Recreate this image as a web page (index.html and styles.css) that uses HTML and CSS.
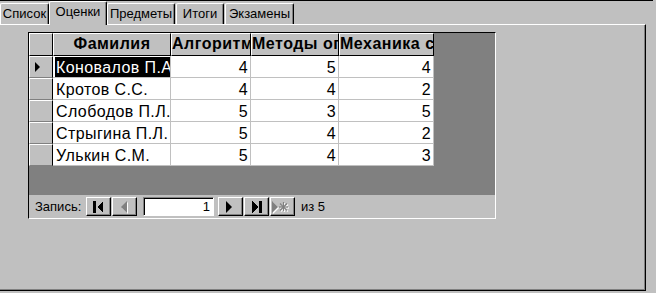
FILE: index.html
```html
<!DOCTYPE html>
<html lang="ru">
<head>
<meta charset="utf-8">
<title>Оценки</title>
<link rel="stylesheet" href="styles.css">
</head>
<body>
<div class="topline"></div>
<div class="tabs">
  <div class="tab t-list">Список</div>
  <div class="tab sel t-marks">Оценки</div>
  <div class="tab t-subj">Предметы</div>
  <div class="tab t-sum">Итоги</div>
  <div class="tab t-exam">Экзамены</div>
</div>
<div class="panel">
  <div class="sub">
    <div class="row hd">
      <div class="cell c0"></div>
      <div class="cell c1 center">Фамилия</div>
      <div class="cell c2">Алгоритмы</div>
      <div class="cell c3">Методы оптимизации</div>
      <div class="cell c4">Механика сплошных сред</div>
    </div>
    <div class="row">
      <div class="cell c0 sel-row"><svg class="rec-arrow" width="6" height="10" viewBox="0 0 6 10"><polygon points="0,0 5,5 0,10" fill="#000"/></svg></div>
      <div class="cell c1 active"><span class="hl">Коновалов П.А.</span></div>
      <div class="cell c2 num">4</div>
      <div class="cell c3 num">5</div>
      <div class="cell c4 num">4</div>
    </div>
    <div class="row">
      <div class="cell c0"></div>
      <div class="cell c1 name">Кротов С.С.</div>
      <div class="cell c2 num">4</div>
      <div class="cell c3 num">4</div>
      <div class="cell c4 num">2</div>
    </div>
    <div class="row">
      <div class="cell c0"></div>
      <div class="cell c1 name">Слободов П.Л.</div>
      <div class="cell c2 num">5</div>
      <div class="cell c3 num">3</div>
      <div class="cell c4 num">5</div>
    </div>
    <div class="row">
      <div class="cell c0"></div>
      <div class="cell c1 name">Стрыгина П.Л.</div>
      <div class="cell c2 num">5</div>
      <div class="cell c3 num">4</div>
      <div class="cell c4 num">2</div>
    </div>
    <div class="row">
      <div class="cell c0"></div>
      <div class="cell c1 name">Улькин С.М.</div>
      <div class="cell c2 num">5</div>
      <div class="cell c3 num">4</div>
      <div class="cell c4 num">3</div>
    </div>
    <div class="empty"></div>
    <div class="nav">
      <span class="nav-label">Запись:</span>
      <div class="btn b-first"><svg width="23" height="17" viewBox="0 0 23 17" shape-rendering="crispEdges"><rect x="6" y="3" width="3" height="12" fill="#000"/><polygon points="10,9 16,3 16,15" fill="#000"/></svg></div>
      <div class="btn b-gap"><svg width="23" height="17" viewBox="0 0 23 17"><polygon points="9,10 15,4 15,16" fill="#fff"/><polygon points="8,9 14,3 14,15" fill="#808080"/></svg></div>
      <div class="rec-input">1</div>
      <div class="btn b-next"><svg width="23" height="17" viewBox="0 0 23 17"><polygon points="7,3 13,9 7,15" fill="#000"/></svg></div>
      <div class="btn b-gap"><svg width="23" height="17" viewBox="0 0 23 17" shape-rendering="crispEdges"><polygon points="7,3 13,9 7,15" fill="#000"/><rect x="14" y="3" width="3" height="12" fill="#000"/></svg></div>
      <div class="btn b-gap"><svg width="23" height="17" viewBox="0 0 23 17"><polygon points="2,4 8,10 2,16" fill="#fff"/><polygon points="1,3 7,9 1,15" fill="#808080"/><g stroke="#fff" stroke-width="1.2"><line x1="13.5" y1="5" x2="13.5" y2="14"/><line x1="9" y1="10" x2="18" y2="10"/><line x1="10" y1="6.5" x2="17" y2="13.5"/><line x1="17" y1="6.5" x2="10" y2="13.5"/></g><g stroke="#808080" stroke-width="1.2"><line x1="12.5" y1="4" x2="12.5" y2="13"/><line x1="8" y1="9" x2="17" y2="9"/><line x1="9" y1="5.5" x2="16" y2="12.5"/><line x1="16" y1="5.5" x2="9" y2="12.5"/></g></svg></div>
      <span class="nav-count">из 5</span>
    </div>
  </div>
</div>
</body>
</html>
```
FILE: styles.css
```css
* { box-sizing: border-box; margin: 0; padding: 0; }
html, body { background: #c0c0c0; }
body {
  width: 656px;
  height: 293px;
  overflow: hidden;
  font-family: "Liberation Sans", Arial, sans-serif;
  color: #000;
}
.topline { height: 1px; width: 653px; background: #000; }

.tabs { display: flex; align-items: flex-end; height: 23px; font-size: 13px; }
.tab {
  height: 21px;
  border-top: 1px solid #fff;
  border-left: 1px solid #fff;
  border-right: 1px solid #000;
  border-radius: 2px 2px 0 0;
  box-shadow: inset -1px 0 #808080;
  text-align: center;
  line-height: 15px;
  padding-top: 2px;
  white-space: nowrap;
}
.tab.sel {
  height: 24px;
  margin-bottom: -1px;
  position: relative;
  z-index: 2;
  background: #c0c0c0;
}
.t-list { width: 49px; }
.t-marks { width: 58px; }
.t-subj { width: 68px; }
.t-sum { width: 48px; margin-left: 1px; }
.t-exam { width: 69px; margin-left: 1px; }

.panel {
  width: 646px;
  height: 267px;
  border-top: 1px solid #fff;
  border-right: 1px solid #000;
  border-bottom: 1px solid #000;
  box-shadow: inset -1px -1px #808080;
  padding: 7px 0 0 28px;
}

.sub {
  width: 468px;
  height: 187px;
  border-top: 1px solid #000;
  border-left: 1px solid #000;
  border-right: 1px solid #fff;
  border-bottom: 1px solid #fff;
  background: #808080;
  display: flex;
  flex-direction: column;
}

.row { display: flex; }
.cell {
  height: 22px;
  background: #fff;
  border-right: 1px solid #c0c0c0;
  border-bottom: 1px solid #c0c0c0;
  font-size: 16px;
  letter-spacing: 0.4px;
  line-height: 17px;
  padding-top: 3px;
  white-space: nowrap;
  overflow: hidden;
}
.c0 { width: 24px; }
.c1 { width: 118px; }
.c2 { width: 80px; }
.c3 { width: 88px; }
.c4 { width: 95px; }

.row .c0 {
  background: #c0c0c0;
  border-top: 1px solid #fff;
  border-left: 1px solid #fff;
  border-bottom: 1px solid #808080;
  border-right: 1px solid #000;
  padding: 0;
}
.row .c0.sel-row { display: flex; align-items: center; padding-left: 5px; }
.rec-arrow { display: block; }

.name { padding-left: 3px; }
.num { text-align: right; padding-right: 2px; }
.active { padding: 0; }
.hl {
  display: block;
  margin: 1px 0 0 2px;
  height: 20px;
  background: #000;
  color: #fff;
  padding: 2px 0 0 1px;
  line-height: 17px;
}

.hd .cell {
  height: 23px;
  background: #c0c0c0;
  border-top: 1px solid #fff;
  border-left: 1px solid #fff;
  border-right: 1px solid #000;
  border-bottom: 1px solid #000;
  font-weight: bold;
  letter-spacing: 0.5px;
  line-height: 20px;
  padding: 0;
}
.hd .center { text-align: center; }

.empty { flex: 1; }

.nav {
  height: 23px;
  background: #c0c0c0;
  display: flex;
  align-items: center;
  font-size: 13px;
  padding-left: 6px;
}
.nav-label { width: 51px; }
.btn {
  width: 25px;
  height: 19px;
  background: #c0c0c0;
  border: 1px solid;
  border-color: #fff #000 #000 #fff;
  box-shadow: inset -1px -1px #808080;
}
.btn svg { display: block; }
.b-gap { margin-left: 1px; }
.b-next { margin-left: 4px; }
.rec-input {
  width: 71px;
  height: 19px;
  margin-left: 6px;
  background: #fff;
  border: 1px solid;
  border-color: #808080 #fff #fff #808080;
  box-shadow: inset 1px 1px #000;
  text-align: right;
  padding-right: 3px;
  line-height: 17px;
  font-size: 13px;
}
.nav-count { margin-left: 6px; }
```
